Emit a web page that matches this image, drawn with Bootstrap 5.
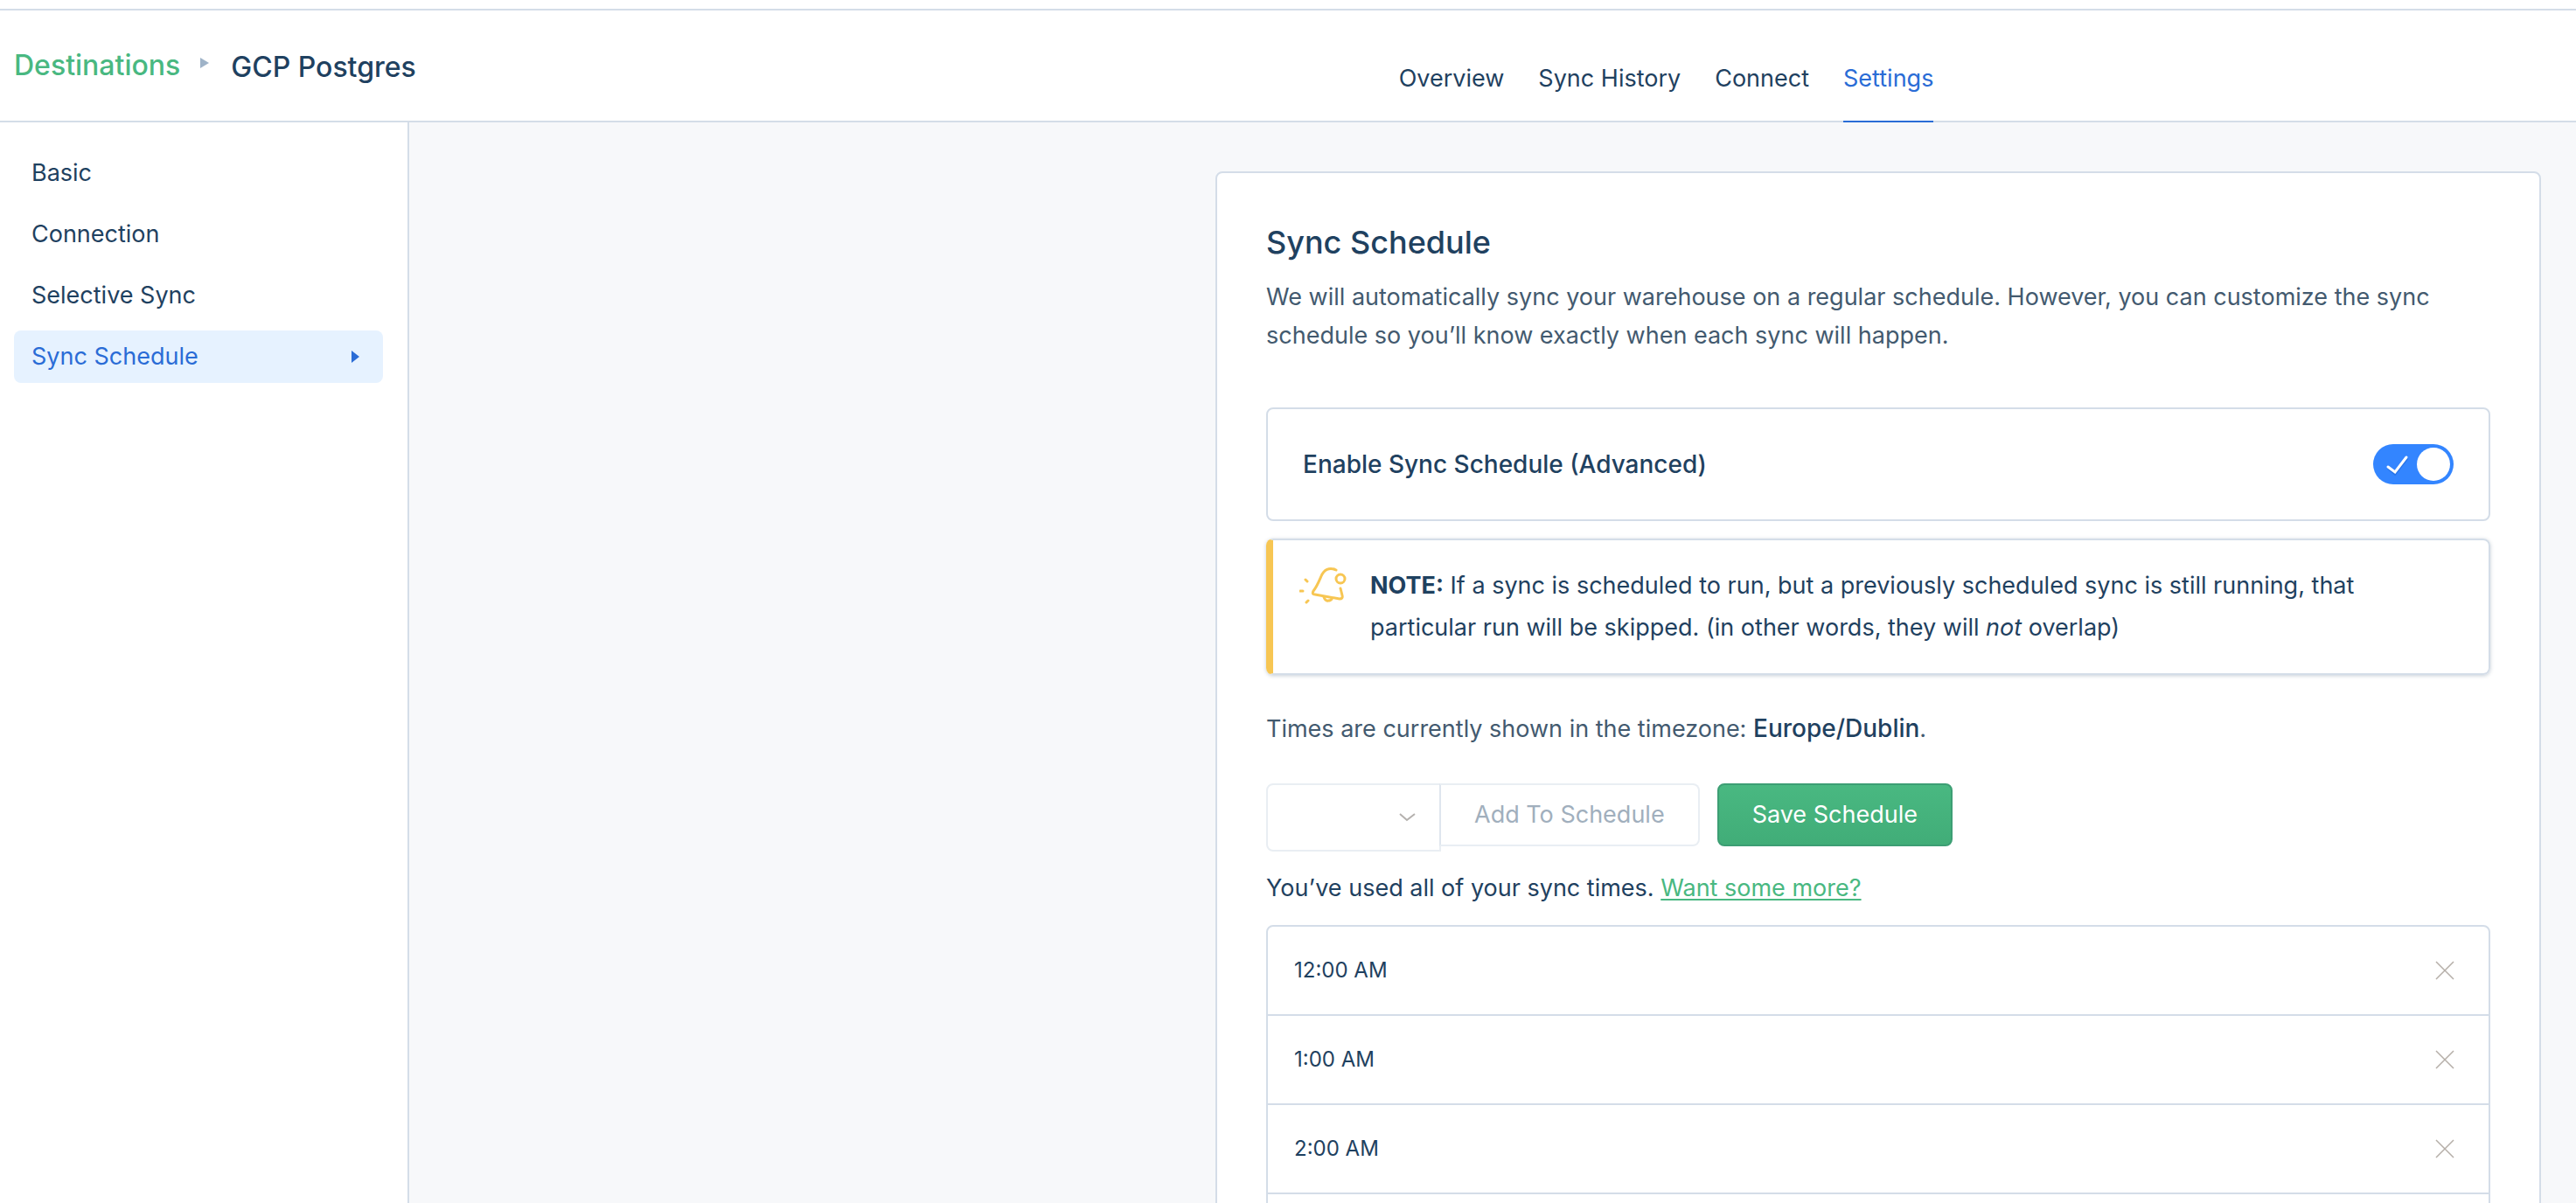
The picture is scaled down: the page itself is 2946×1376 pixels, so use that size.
<!DOCTYPE html>
<html lang="en">
<head>
<meta charset="utf-8">
<meta name="viewport" content="width=device-width, initial-scale=1">
<title>GCP Postgres – Sync Schedule</title>
<link href="https://cdn.jsdelivr.net/npm/bootstrap@5.3.0/dist/css/bootstrap.min.css" rel="stylesheet">
<style>
:root{--ink:#1f4160;--soft:#435a6f;--line:#d4dde8;--green:#49b881;--blue:#2a6cd6;--canvas:#f7f8fa}
body{font-family:Inter,"Liberation Sans",sans-serif;font-size:27px;line-height:44px;color:var(--ink);background:var(--canvas)}
.topbar{padding-top:10px;background:#fff}
.app-header{height:130px;border-top:2px solid var(--line);border-bottom:2px solid var(--line)}
.crumbs{width:54.3%;padding-left:16px;font-size:32px;font-weight:500}
.crumbs a{color:var(--green)}
.crumbs svg{margin:0 25px 6px 23px}
.tabs{gap:39px}
.tabs .nav-link{padding:0 0 26px;color:var(--ink);border-bottom:2px solid transparent;margin-bottom:-2px}
.tabs .nav-link.active{color:var(--blue);border-color:var(--blue)}
.side{width:468px;padding:28px 28px 28px 16px;border-right:2px solid var(--line);background:#fff}
.side .nav{gap:10px}
.side .nav-link{height:60px;padding:0 27px 0 20px;color:var(--ink);border-radius:8px}
.side .nav-link.active{background:#e6f2ff;color:var(--blue)}
.content{padding:56px 40px 0}
.panel{width:100%;max-width:1516px;padding:56px;border:2px solid var(--line);border-radius:8px;background:#fff}
.panel h1{font-size:36px;line-height:46px;font-weight:500;margin-bottom:18px}
.soft{color:var(--soft)}
.intro{margin-bottom:60px}
.medium{font-size:28px;font-weight:500}
.enable{height:130px;padding:0 40px;border:2px solid var(--line);border-radius:8px;margin-bottom:20px}
.toggle.form-check-input{width:92px;height:46px;margin:0;border:0;border-radius:23px;background-color:#3385ff;
background-image:url("data:image/svg+xml,%3Csvg xmlns='http://www.w3.org/2000/svg' viewBox='0 0 92 46'%3E%3Cpath d='M17 27l8 7 14-18' fill='none' stroke='%231d63d1' stroke-opacity='.5' stroke-width='3'/%3E%3Cpath d='M17 26l8 6 13-17' fill='none' stroke='%23fff' stroke-width='3' stroke-linecap='round'/%3E%3Ccircle cx='69' cy='23' r='19' fill='%23fff'/%3E%3C/svg%3E");background-size:100% 100%;background-position:center}
.note{padding:28px 40px 28px 30px;border:2px solid var(--line);border-left:8px solid #f7c653;border-radius:8px;line-height:48px;box-shadow:0 1px 4px rgba(31,65,96,.25);gap:26px;margin-bottom:40px}
.note b{font-weight:700}
.zone{margin-bottom:40px}
.zone strong{font-size:28px;line-height:1;font-weight:500;color:var(--ink)}
.actions{margin-bottom:20px}
.actions .form-select{width:200px;height:78px;padding:0;border:2px solid #e9eef3;border-radius:8px 0 0 8px;background-color:#fff;
background-image:url("data:image/svg+xml,%3Csvg xmlns='http://www.w3.org/2000/svg' viewBox='0 0 20 12'%3E%3Cpath d='M1 2l8 7 9-7' fill='none' stroke='%23b4b1ae' stroke-width='2'/%3E%3C/svg%3E");background-size:20px 12px;background-position:right 26px center}
.actions .btn{height:72px;padding:0 38px;font-size:27px;border-radius:8px}
.actions .add{margin-left:-2px;border:2px solid #e9eef3;border-left-color:#dfe6ee;border-radius:0 8px 8px 0;color:#a1afbd;background:#fff;opacity:1}
.actions .save{margin-left:20px;border:2px solid #3d9e74;color:#fff;background:linear-gradient(#49b881,#41ad78)}
.quota{margin-bottom:20px}
.quota a{color:var(--green);text-underline-offset:3px;text-decoration-thickness:2px}
.times{border-radius:8px}
.times .list-group-item{height:104px;margin-bottom:-2px;padding:0 39px 0 30px;border:2px solid var(--line);font-size:24px;color:var(--ink)}
</style>
<script src="https://cdn.jsdelivr.net/npm/bootstrap@5.3.0/dist/js/bootstrap.bundle.min.js"></script>
</head>
<body>
<div class="vh-100 d-flex flex-column overflow-hidden">
  <div class="topbar">
    <header class="app-header d-flex">
      <div class="crumbs d-flex align-items-center flex-shrink-0">
        <a href="#" class="text-decoration-none">Destinations</a>
        <svg width="10" height="12" viewBox="0 0 10 12" aria-hidden="true"><path d="M0 0l10 6-10 6z" fill="#9fb3c8"/></svg>
        <span class="pt-1">GCP Postgres</span>
      </div>
      <nav class="tabs nav align-items-end flex-nowrap">
        <a class="nav-link" href="#">Overview</a>
        <a class="nav-link" href="#">Sync History</a>
        <a class="nav-link" href="#">Connect</a>
        <a class="nav-link active" href="#" aria-current="page">Settings</a>
      </nav>
    </header>
  </div>
  <div class="d-flex flex-grow-1 overflow-hidden">
    <aside class="side flex-shrink-0">
      <nav class="nav flex-column">
        <a class="nav-link d-flex align-items-center" href="#">Basic</a>
        <a class="nav-link d-flex align-items-center" href="#">Connection</a>
        <a class="nav-link d-flex align-items-center" href="#">Selective Sync</a>
        <a class="nav-link active d-flex align-items-center justify-content-between" href="#" aria-current="page">Sync Schedule
          <svg width="10" height="14" viewBox="0 0 10 14" aria-hidden="true"><path d="M1 0l9 7-9 7z" fill="currentColor"/></svg>
        </a>
      </nav>
    </aside>
    <main class="content flex-grow-1 d-flex justify-content-end align-items-start overflow-hidden">
      <section class="panel">
        <h1>Sync Schedule</h1>
        <p class="intro soft">We will automatically sync your warehouse on a regular schedule. However, you can customize the sync schedule so you’ll know exactly when each sync will happen.</p>
        <div class="enable d-flex align-items-center justify-content-between">
          <label class="medium" for="enable-sync">Enable Sync Schedule (Advanced)</label>
          <input class="toggle form-check-input" type="checkbox" role="switch" id="enable-sync" checked>
        </div>
        <div class="note d-flex align-items-start">
          <svg class="flex-shrink-0" width="55" height="48" viewBox="0 0 55 48" fill="none" stroke="#f7c653" stroke-width="3" stroke-linecap="round" stroke-linejoin="round" aria-hidden="true">
            <path d="M42 6C34 2 28 6 25 13C22 20 20 25 16 30Q14 34 18 34L46 39Q50 39 49 35L47 27"/>
            <circle cx="47" cy="16" r="5"/>
            <path d="M28 37Q30 42 33 41Q36 41 37 39M7 17l2 2M1 30h3M8 43l2-2"/>
          </svg>
          <div><b>NOTE:</b> If a sync is scheduled to run, but a previously scheduled sync is still running, that particular run will be skipped. (in other words, they will <em>not</em> overlap)</div>
        </div>
        <p class="zone soft">Times are currently shown in the timezone: <strong>Europe/Dublin</strong>.</p>
        <div class="actions d-flex align-items-start">
          <select class="form-select" aria-label="Sync time" disabled></select>
          <button type="button" class="btn add" disabled>Add To Schedule</button>
          <button type="button" class="btn save">Save Schedule</button>
        </div>
        <p class="quota">You’ve used all of your sync times. <a href="#">Want some more?</a></p>
        <ul class="times list-group">
          <li class="list-group-item d-flex align-items-center justify-content-between">12:00 AM
            <button type="button" class="btn p-0 border-0 d-flex" aria-label="Remove 12:00 AM"><svg width="22" height="22" viewBox="0 0 22 22"><path d="M1 1l20 20M21 1L1 21" stroke="#b5aea8" stroke-width="1.5"/></svg></button></li>
          <li class="list-group-item d-flex align-items-center justify-content-between">1:00 AM
            <button type="button" class="btn p-0 border-0 d-flex" aria-label="Remove 1:00 AM"><svg width="22" height="22" viewBox="0 0 22 22"><path d="M1 1l20 20M21 1L1 21" stroke="#b5aea8" stroke-width="1.5"/></svg></button></li>
          <li class="list-group-item d-flex align-items-center justify-content-between">2:00 AM
            <button type="button" class="btn p-0 border-0 d-flex" aria-label="Remove 2:00 AM"><svg width="22" height="22" viewBox="0 0 22 22"><path d="M1 1l20 20M21 1L1 21" stroke="#b5aea8" stroke-width="1.5"/></svg></button></li>
          <li class="list-group-item"></li>
        </ul>
      </section>
    </main>
  </div>
</div>
</body>
</html>
